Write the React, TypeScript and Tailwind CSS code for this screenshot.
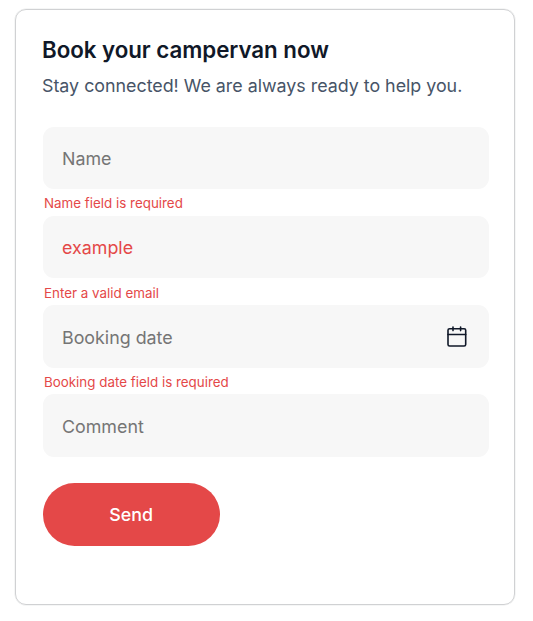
const field = "flex h-[62.4px] w-[446.4px] items-center rounded-[11px] bg-[#f7f7f7] pt-[2px] pl-[19.4px] pr-[22px] text-[17.85px] leading-6 text-[#757575]";
const error = "h-[26.9px] pl-[1.4px] pt-[4.5px] text-[13.38px] leading-5 text-[#e44848]";

export default function App() {
  return (
    <main className="h-[621px] w-[533px] overflow-hidden bg-white pl-[15px] pt-[9px] font-['Inter',sans-serif]">
      <form noValidate className="h-[596px] w-[500px] rounded-[11px] border border-[#d0d1d3] pl-[26.6px] pt-[26px] shadow-[0_0_0_0.5px_#d0d1d366]">
        <h1 className="-ml-[0.6px] text-[22.3px] font-semibold leading-7 tracking-[-0.03px] text-[#101828]">Book your campervan now</h1>
        <p className="-ml-[0.6px] mt-[9.6px] text-[17.85px] leading-6 tracking-[-0.01px] text-[#475467]">Stay connected! We are always ready to help you.</p>
        <div className="mt-[29px]">
          <div className={field}>Name</div>
          <p className={error}>Name field is required</p>
          <div className={field}><span className="text-[#e44848]">example</span></div>
          <p className={error}>Enter a valid email</p>
          <div className={field}>
            <span className="flex-1 pt-px">Booking date</span>
            <svg className="-mt-px" width="20" height="21" viewBox="0 0 20 21" fill="none" stroke="#101828" strokeWidth="1.6" strokeLinecap="round" strokeLinejoin="round">
              <rect x="1" y="2.7" width="17.7" height="17.3" rx="1.6" />
              <path d="M1 8.5h17.7M6 1v3.6M13.6 1v3.6" />
            </svg>
          </div>
          <p className={error}>Booking date field is required</p>
          <div className={field}>Comment</div>
        </div>
        <button type="button" className="mt-[26.6px] h-[62.4px] w-[177px] rounded-full bg-[#e44848] pt-[2px] text-[17.85px] font-medium text-white">Send</button>
      </form>
    </main>
  );
}
